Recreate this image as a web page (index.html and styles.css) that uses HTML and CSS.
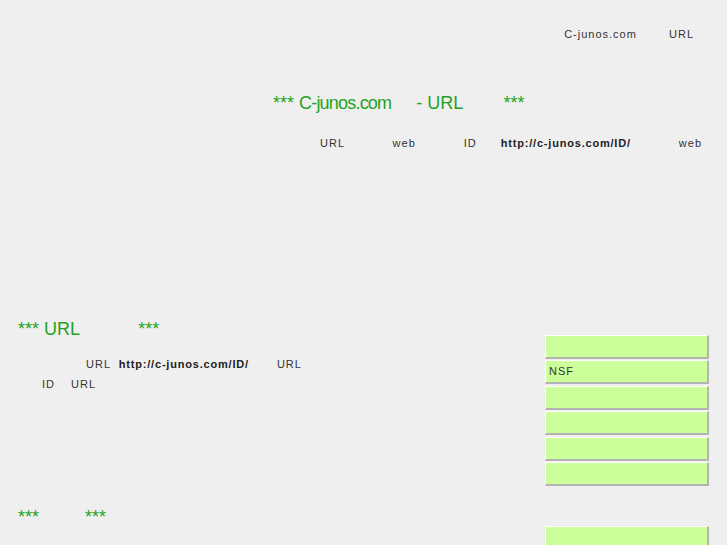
FILE: index.html
```html
<!DOCTYPE html>
<html lang="ja">
<head>
<meta charset="utf-8">
<title>C-junos.com</title>
<link rel="stylesheet" href="styles.css">
</head>
<body>
<div class="nav">C-junos.com　　  URL</div>
<h1 class="title">*** <span class="dom">C-junos.com</span>　 - URL　　 ***</h1>
<p class="lead">URL　　　　web　　　　ID　　<b>http://c-junos.com/ID/</b>　　　　web</p>
<div class="columns">
  <div class="main">
    <h2 class="sec">*** URL　　　 ***</h2>
    <p class="text">　　　　　  URL  <b>http://c-junos.com/ID/</b> 　　URL
　　ID　 URL</p>
    <h3 class="sec">*** 　　 ***</h3>
  </div>
  <div class="side">
    <div class="group">
      <div class="item"></div>
      <div class="item">NSF</div>
      <div class="item"></div>
      <div class="item"></div>
      <div class="item"></div>
      <div class="item"></div>
    </div>
    <div class="group">
      <div class="item"></div>
    </div>
  </div>
</div>
</body>
</html>
```
FILE: styles.css
```css
html, body {
  margin: 0;
  padding: 0;
  background: #efefef;
  overflow: hidden;
}
body {
  font-family: "Liberation Sans", "Noto Sans CJK JP", sans-serif;
  font-size: 11px;
  letter-spacing: 1px;
  color: #333;
  line-height: 14px;
}
.nav {
  padding: 27px 33px 0 0;
  text-align: right;
  white-space: pre;
}
.title {
  margin: 51px 0 0 0;
  padding-left: 273px;
  font-size: 18px;
  font-weight: normal;
  letter-spacing: 0;
  line-height: 22px;
  color: #1fa31f;
  white-space: pre;
}
.title .dom {
  letter-spacing: -0.8px;
  margin-right: 2px;
}
.lead {
  margin: 22px 0 0 0;
  padding-left: 320px;
  white-space: pre;
}
.lead b, .text b {
  color: #222;
  letter-spacing: 0.8px;
}
.columns {
  margin-top: 168px;
  display: flex;
  justify-content: space-between;
  padding: 0 18px 0 18px;
}
.main {
  width: 320px;
}
.sec {
  margin: 0;
  font-size: 18px;
  font-weight: normal;
  letter-spacing: 0;
  line-height: 22px;
  color: #1fa31f;
  white-space: pre;
}
h3.sec {
  margin-top: 112px;
}
.text {
  margin: 14px 0 0 0;
  line-height: 20px;
  white-space: pre;
}
.side {
  width: 164px;
  margin-top: 17px;
}
.group + .group {
  margin-top: 40px;
}
.item {
  box-sizing: border-box;
  height: 24px;
  margin-bottom: 1.4px;
  background: #ccff99;
  border-top: 1px solid #fff;
  border-left: 1px solid #fff;
  border-right: 2px solid #b4b4b4;
  border-bottom: 2px solid #b4b4b4;
  padding: 3px 0 0 3px;
  line-height: 14px;
}
```
